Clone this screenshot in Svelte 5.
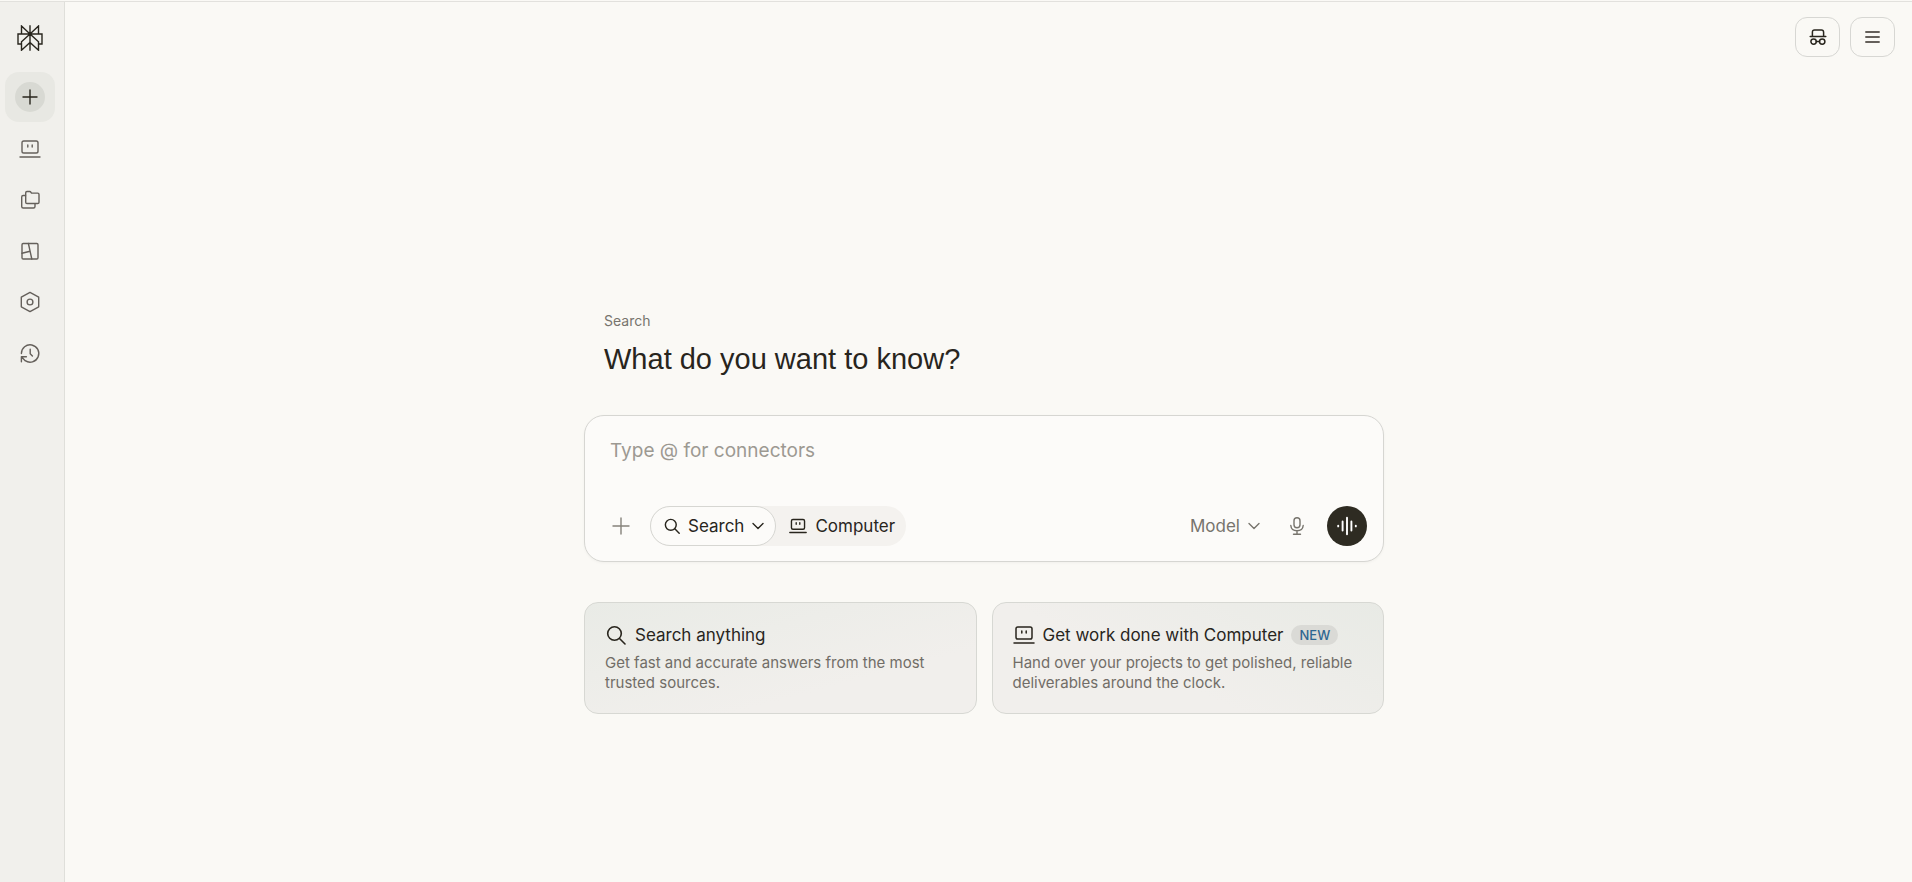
<script>
  const nav = ['computer', 'spaces', 'artifacts', 'customize', 'history'];
  let query = $state('');
</script>

{#snippet laptop(size, weight)}
  <svg width={size} height={size} viewBox="0 0 22 22" fill="none" stroke="currentColor" stroke-width={weight} stroke-linecap="round" aria-hidden="true">
    <rect x="3" y="3" width="16" height="12" rx="1.8" />
    <path d="M8.8 7v2M13.2 7v2M1 19h20" />
  </svg>
{/snippet}

{#snippet magnifier(size, weight)}
  <svg width={size} height={size} viewBox="0 0 20 20" fill="none" stroke="currentColor" stroke-width={weight} stroke-linecap="round" aria-hidden="true">
    <circle cx="8.5" cy="8.5" r="6.8" />
    <path d="M13.5 13.5 19 19" />
  </svg>
{/snippet}

{#snippet chevron()}
  <svg width="12" height="12" viewBox="0 0 12 12" fill="none" stroke="currentColor" stroke-width="1.4" stroke-linecap="round" stroke-linejoin="round" aria-hidden="true">
    <path d="M1 3.5 6 8.5l5-5" />
  </svg>
{/snippet}

<div class="app">
  <nav class="sidebar" aria-label="Main">
    <a class="logo" href="#home" aria-label="Home">
      <svg width="26" height="26" viewBox="0 0 26 26" fill="none" stroke="currentColor" stroke-width="1.4" aria-hidden="true">
        <path d="M13 .3v25.4M13 9 4.5 1v8M13 9l8.5-8v8M4.5 19H1V9h24v10h-3.5M13 9l-8.5 7.8v8.4L13 17.4l8.5 7.8v-8.4z" />
      </svg>
    </a>
    <button class="item new" aria-label="New">
      <span class="disc">
        <svg width="16" height="16" viewBox="0 0 16 16" stroke="currentColor" stroke-width="1.4" stroke-linecap="round" aria-hidden="true"><path d="M8 1v14M1 8h14" /></svg>
      </span>
    </button>
    {#each nav as name}
      <a class="item" href="#{name}" aria-label={name}>
        {#if name === 'computer'}
          {@render laptop(22, 1.4)}
        {:else}
          <svg width="22" height="22" viewBox="0 0 22 22" fill="none" stroke="currentColor" stroke-width="1.4" stroke-linecap="round" stroke-linejoin="round" aria-hidden="true">
            {#if name === 'spaces'}
              <path d="M6.7 3.8c0-.8.5-1.3 1.3-1.3h2.7c.6 0 1 .3 1.3.8l.5.8h6.2c.8 0 1.300.5 1.300 1.300v7.800c0 .8-.5 1.300-1.300 1.300H8c-.8 0-1.300-.5-1.300-1.300z" />
              <path d="M6.500 6.500H4.200c-.9 0-1.500.6-1.500 1.500v9.500c0 .9.600 1.500 1.500 1.500H14.500c.9 0 1.500-.6 1.500-1.500v-2.800" />
            {:else if name === 'artifacts'}
              <rect x="3" y="3.5" width="16" height="15.5" rx="1.2" />
              <path d="m9.400 3.500 3.400 15.500M3 13.300l8-2" />
            {:else if name === 'customize'}
              <path d="M11 1.400 19.700 6.200v9.600L11 20.600 2.300 15.800V6.200z" />
              <circle cx="11" cy="11" r="2.900" />
            {:else}
              <path d="M2.400 11.500a8.700 8.700 0 1 1 3.800 7.200M2.400 19.800v-5h5M2.600 15l3.600 3.700M11.200 7.300v4.500l2.200 2.200" />
            {/if}
          </svg>
        {/if}
      </a>
    {/each}
  </nav>

  <div class="page">
    <header class="top">
      <button class="square dark" aria-label="Incognito">
        <svg width="18" height="18" viewBox="0 0 18 18" fill="none" stroke="currentColor" stroke-width="1.5" stroke-linecap="round" stroke-linejoin="round" aria-hidden="true">
          <path d="M1.200 8.500h15.600M3.400 8.300V4.200c0-1.500.7-2.200 2.200-2.200h6.800c1.500 0 2.200.7 2.200 2.200v4.100M7.300 13.500h3.200" />
          <circle cx="4.600" cy="13.600" r="2.700" /><circle cx="13.200" cy="13.600" r="2.700" />
        </svg>
      </button>
      <button class="square" aria-label="Menu">
        <svg width="17" height="16" viewBox="0 0 17 16" stroke="currentColor" stroke-width="1.9" stroke-linecap="round" aria-hidden="true"><path d="M2 3h13M2 8h13M2 13h13" /></svg>
      </button>
    </header>

    <main class="content">
      <div class="intro">
        <p>Search</p>
        <h1>What do you want to know?</h1>
      </div>

      <form class="composer" onsubmit={(e) => e.preventDefault()}>
        <input type="text" bind:value={query} placeholder="Type @ for connectors" aria-label="Ask a question" />
        <div class="tools">
          <button type="button" class="plain" aria-label="Add files">
            <svg width="18" height="18" viewBox="0 0 18 18" stroke="currentColor" stroke-width="1.4" stroke-linecap="round" aria-hidden="true"><path d="M9 1v16M1 9h16" /></svg>
          </button>
          <div class="modes">
            <button type="button" class="mode active">
              {@render magnifier(16, 1.8)}<span>Search</span>{@render chevron()}
            </button>
            <button type="button" class="mode">
              {@render laptop(18, 1.7)}<span>Computer</span>
            </button>
          </div>
          <button type="button" class="model"><span>Model</span>{@render chevron()}</button>
          <button type="button" class="plain mic" aria-label="Dictate">
            <svg width="18" height="20" viewBox="0 0 18 20" fill="none" stroke="currentColor" stroke-width="1.4" stroke-linecap="round" aria-hidden="true">
              <rect x="6" y="1.7" width="6" height="10" rx="3" />
              <path d="M2.800 9.500c.3 3.300 2.700 5.300 6.200 5.300s5.900-2 6.200-5.300M9 15v3.300M5.500 18.300h7" />
            </svg>
          </button>
          <button type="button" class="voice" aria-label="Voice mode">
            <svg width="20" height="20" viewBox="0 0 20 20" stroke="currentColor" stroke-width="1.9" stroke-linecap="round" aria-hidden="true">
              <path d="M1.200 9.600v.8M5.600 5.500v9M10 1.800v16.400M14.400 5.500v9M18.800 9.600v.8" />
            </svg>
          </button>
        </div>
      </form>

      <div class="cards">
        <button class="card left">
          <span class="title">{@render magnifier(20, 1.6)}<span>Search anything</span></span>
          <span class="text">Get fast and accurate answers from the most trusted sources.</span>
        </button>
        <button class="card right">
          <span class="title">{@render laptop(22, 1.5)}<span>Get work done with Computer</span><span class="badge">NEW</span></span>
          <span class="text">Hand over your projects to get polished, reliable deliverables around the clock.</span>
        </button>
      </div>
    </main>
  </div>
</div>

<style>
  :global(body) { padding-top: 1px; background: #faf9f5; }
  * { box-sizing: border-box; }
  svg { display: block; flex: none; }
  button, input { font: inherit; color: inherit; border: 0; margin: 0; padding: 0; background: none; }
  button { cursor: pointer; }

  .app {
    display: flex;
    min-height: calc(100vh - 1px);
    border-top: 1px solid #e2e1dd;
    background: #faf9f5;
    color: #28251d;
    font-family: Inter, "Liberation Sans", sans-serif;
  }
  .sidebar {
    display: flex;
    flex-direction: column;
    gap: 1px;
    flex: 0 0 65px;
    padding: 11px 9px 0 5px;
    background: #f1f0ec;
    border-right: 1px solid #dfdfda;
    color: #65605b;
  }
  .logo {
    display: grid;
    place-items: center;
    height: 50px;
    margin-bottom: 8px;
    color: #28251d;
  }
  .item {
    display: grid;
    place-items: center;
    width: 50px;
    height: 50px;
    border-radius: 14px;
    color: inherit;
  }
  .new { margin-bottom: 1px; background: #e8e8e3; color: #28251d; }
  .disc {
    display: grid;
    place-items: center;
    width: 30px;
    height: 30px;
    border-radius: 50%;
    background: #d8d9d3;
  }

  .page { flex: 1; min-width: 0; }
  .top {
    display: flex;
    justify-content: flex-end;
    gap: 10px;
    padding: 15px 17px 0;
  }
  .square {
    display: grid;
    place-items: center;
    width: 45px;
    height: 40px;
    border: 1px solid #d7d7d3;
    border-radius: 12px;
    color: #65605b;
  }
  .dark { color: #28251d; }

  .content {
    max-width: 809px;
    margin: 0 auto;
    padding: 252px 9px 40px 0;
  }
  .intro { padding: 0 20px; }
  .intro p {
    margin: 0;
    font-size: 14px;
    line-height: 24px;
    color: #77746d;
  }
  h1 {
    margin: 8px 0 0;
    font-family: "Liberation Sans", Arial, sans-serif;
    font-size: 29px;
    font-weight: 400;
    line-height: 36px;
  }
  .composer {
    margin-top: 38px;
    padding: 16px 16px 15px;
    border: 1px solid #d6d6d2;
    border-radius: 20px;
    background: #fcfbf9;
    box-shadow: 0 1px 3px #0000000a;
  }
  .composer input {
    display: block;
    width: 100%;
    height: 36px;
    padding: 0 9px;
    font-size: 19px;
    outline: none;
  }
  .composer input::placeholder { color: #9c9992; opacity: 1; }
  .tools {
    display: flex;
    align-items: center;
    margin-top: 38px;
  }
  .plain {
    display: grid;
    place-items: center;
    width: 40px;
    height: 40px;
    color: #85827b;
  }
  .modes {
    display: flex;
    margin-left: 9px;
    border-radius: 20px;
    background: #f4f2ef;
  }
  .mode, .model {
    display: flex;
    align-items: center;
    gap: 8px;
    height: 40px;
    padding: 0 11px 0 13px;
    border-radius: 20px;
    font-size: 17px;
  }
  .active {
    border: 1px solid #d6d6d2;
    background: #fcfbf9;
  }
  .model { margin-left: auto; color: #77746d; }
  .mic { margin: 0 10px 0 6px; color: #77746d; }
  .voice {
    display: grid;
    place-items: center;
    width: 40px;
    height: 40px;
    border-radius: 50%;
    background: #2e2b22;
    color: #fff;
  }

  .cards {
    display: grid;
    grid-template-columns: 1fr 1fr;
    gap: 15px;
    margin-top: 40px;
  }
  .card {
    display: flex;
    flex-direction: column;
    gap: 6px;
    padding: 20px;
    border: 1px solid #d7d8d3;
    border-radius: 14px;
    text-align: left;
  }
  .left { background: linear-gradient(165deg, #e9ebe6, #f1efec 70%); }
  .right { background: linear-gradient(205deg, #e8eae5, #f1efec 60%); }
  .left svg { margin: 0 1px; }
  .title {
    display: flex;
    align-items: center;
    gap: 8px;
    font-size: 17px;
    line-height: 24px;
  }
  .text {
    font-size: 15px;
    line-height: 20px;
    color: #716d67;
  }
  .badge {
    padding: 0 8px;
    border-radius: 10px;
    background: #dadad6;
    color: #2e6691;
    font-size: 13px;
    font-weight: 500;
    line-height: 20px;
  }
</style>
